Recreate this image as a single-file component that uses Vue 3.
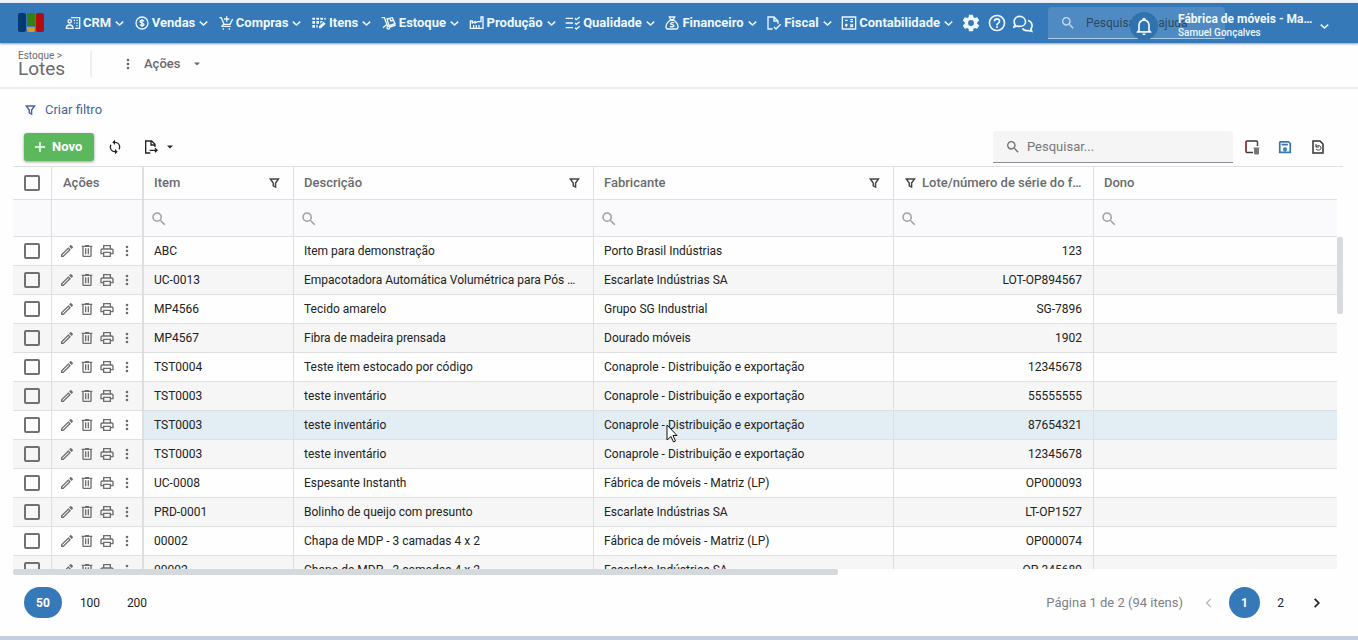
<script setup>
import { ref } from 'vue'

const fill = (d) => ({ fill: true, d })
const line = (d, w = 2) => ({ d, w })

const icons = {
  crm: line('M2 20c0-3 2-5 5-5s5 2 5 5zM7 12a2.500 2.500 0 1 0 0-5 2.500 2.500 0 0 0 0 5M9 4h13v16h-7M13 8h2M17 8h2M14 12h1M17 12h2M17 16h2'),
  vendas: line('M12 3a9 9 0 1 0 0 18 9 9 0 0 0 0-18M15 9.500c-1-2-6-2-6 .3S15 12 15 14.300s-5 2-6 0M12 6v12'),
  compras: line('M2 4h3l4 10h9l4-8M8 14l-2 3h13M8 20v2M17 20v2M13 2v8M9 6h8'),
  itens: fill('M2 4h4v3H2zM8 4h4v3H8zM14 4h4v3h-4zM20 4h2v3h-2zM2 9h4v4H2zM8 9h4v4H8zM2 15h4v4H2zM8 15h2v4H8zM14 9h4l-4 4zM12 17l7-7 3 3-7 7h-3z'),
  estoque: line('M1 4h4l5 13M13 18l9-3M9 6l8-2 4 9-9 3zM13 5l2 4 3-1M11 21a2 2 0 1 0 0-4 2 2 0 0 0 0 4M3 19l6-5'),
  producao: line('M2 20V9h3v3l4-2v2l4-2h5V3h3v17zM7 19v-4M11 19v-4M15 19v-4'),
  qualidade: line('M1 5h11M1 12h11M1 19h11M15 5l2 2 5-4M15 12l2 2 5-4M15 19l2 2 5-4'),
  financeiro: line('M8 3h8l-2 4h-4zM9 8c-4 3-6 7-6 10 0 2 1 3 3 3h12c2 0 3-1 3-3 0-3-2-7-6-10zM15 12c-1-1-5-1-5 1s5 1 5 3-4 2-6 1'),
  fiscal: line('M10 21H3V3h9l6 6v4M12 3v6h6M12 18l3 3 7-7'),
  contabilidade: line('M2 3h20v18H2zM6 8h4M14 7h4M14 10h4M6 15h4M8 13v5M14 14l4 4M18 14l-4 4'),
  chat: line('M15 11c0 3-3 5-7 5-1 0-2 0-3-.5L1 17l1.500-3C.5 11 1 4 8 4c4 0 7 3 7 7M18 9c5 1 6 7 3.500 10l1 3-4-1c-3 .5-6-.5-7-2.500'),
  cog: fill('M12,15.5A3.5,3.5 0 0,1 8.5,12A3.5,3.5 0 0,1 12,8.5A3.5,3.5 0 0,1 15.5,12A3.5,3.5 0 0,1 12,15.5M19.43,12.97C19.47,12.65 19.5,12.33 19.5,12C19.5,11.67 19.47,11.34 19.43,11L21.54,9.37C21.73,9.22 21.78,8.95 21.66,8.73L19.66,5.27C19.54,5.05 19.27,4.96 19.05,5.05L16.56,6.05C16.04,5.66 15.5,5.32 14.87,5.07L14.5,2.42C14.46,2.18 14.25,2 14,2H10C9.75,2 9.54,2.18 9.5,2.42L9.13,5.07C8.5,5.32 7.96,5.66 7.44,6.05L4.95,5.05C4.73,4.96 4.46,5.05 4.34,5.27L2.34,8.73C2.21,8.95 2.27,9.22 2.46,9.37L4.57,11C4.53,11.34 4.5,11.67 4.5,12C4.5,12.33 4.53,12.65 4.57,12.97L2.46,14.63C2.27,14.78 2.21,15.05 2.34,15.27L4.34,18.73C4.46,18.95 4.73,19.03 4.95,18.95L7.44,17.94C7.96,18.34 8.5,18.68 9.13,18.93L9.5,21.58C9.54,21.82 9.75,22 10,22H14C14.25,22 14.46,21.82 14.5,21.58L14.87,18.93C15.5,18.67 16.04,18.34 16.56,17.94L19.05,18.95C19.27,19.03 19.54,18.95 19.66,18.73L21.66,15.27C21.78,15.05 21.73,14.78 21.54,14.63L19.43,12.97Z'),
  help: fill('M11,18H13V16H11V18M12,2A10,10 0 0,0 2,12A10,10 0 0,0 12,22A10,10 0 0,0 22,12A10,10 0 0,0 12,2M12,20C7.59,20 4,16.41 4,12C4,7.59 7.59,4 12,4C16.41,4 20,7.59 20,12C20,16.41 16.41,20 12,20M12,6A4,4 0 0,0 8,10H10A2,2 0 0,1 12,8A2,2 0 0,1 14,10C14,12 11,11.75 11,15H13C13,12.75 16,12.5 16,10A4,4 0 0,0 12,6Z'),
  bell: fill('M10 21H14C14 22.1 13.1 23 12 23S10 22.1 10 21M21 19V20H3V19L5 17V11C5 7.9 7.03 5.17 10 4.29V4C10 2.9 10.9 2 12 2S14 2.9 14 4V4.29C16.97 5.17 19 7.9 19 11V17L21 19M17 11C17 8.24 14.76 6 12 6S7 8.24 7 11V18H17V11Z'),
  search: fill('M15.5 14h-.79l-.28-.27A6.471 6.471 0 0 0 16 9.5 6.5 6.5 0 1 0 9.5 16c1.61 0 3.09-.59 4.23-1.57l.27.28v.79l5 4.99L20.49 19l-4.99-5zm-6 0C7.01 14 5 11.99 5 9.5S7.01 5 9.5 5 14 7.01 14 9.5 11.99 14 9.5 14z'),
  filter: line('M4 5h14l-5 7v7l-4-2v-5z', 2.5),
  pencil: fill('M14.06,9L15,9.94L5.92,19H5V18.08L14.06,9M17.66,3C17.41,3 17.15,3.1 16.96,3.29L15.13,5.12L18.88,8.87L20.71,7.04C21.1,6.65 21.1,6 20.71,5.63L18.37,3.29C18.17,3.09 17.92,3 17.66,3M14.06,6.19L3,17.25V21H6.75L17.81,9.94L14.06,6.19Z'),
  trash: fill('M9,3V4H4V6H5V19A2,2 0 0,0 7,21H17A2,2 0 0,0 19,19V6H20V4H15V3H9M7,6H17V19H7V6M9,8V17H11V8H9M13,8V17H15V8H13Z'),
  printer: fill('M19 8C20.66 8 22 9.34 22 11V17H18V21H6V17H2V11C2 9.34 3.34 8 5 8H6V3H18V8H19M8 5V8H16V5H8M16 19V15H8V19H16M18 15H20V11C20 10.45 19.55 10 19 10H5C4.45 10 4 10.45 4 11V15H6V13H18V15Z'),
  dots: fill('M12,16A2,2 0 0,1 14,18A2,2 0 0,1 12,20A2,2 0 0,1 10,18A2,2 0 0,1 12,16M12,10A2,2 0 0,1 14,12A2,2 0 0,1 12,14A2,2 0 0,1 10,12A2,2 0 0,1 12,10M12,4A2,2 0 0,1 14,6A2,2 0 0,1 12,8A2,2 0 0,1 10,6A2,2 0 0,1 12,4Z'),
  sync: fill('M12,18A6,6 0 0,1 6,12C6,11 6.25,10.03 6.7,9.2L5.24,7.74C4.46,8.97 4,10.43 4,12A8,8 0 0,0 12,20V23L16,19L12,15M12,4V1L8,5L12,9V6A6,6 0 0,1 18,12C18,13 17.75,13.97 17.3,14.8L18.76,16.26C19.54,15.03 20,13.57 20,12A8,8 0 0,0 12,4Z'),
  exportar: line('M11 21H4V3h9l5 5v4M12 3v6h6M10 17h11M18 14l3 3-3 3'),
  plus: line('M12 2v20M2 12h20', 3),
  down: line('M2 7l10 9 10-9', 4),
  caret: fill('M6 9l6 6 6-6z'),
  left: line('M15 5l-7 7 7 7'),
  right: line('M8 5l7 7-7 7', 3),
  save: line('M4 3h14l3 3v15H3V4zM6 8h11M12 18a2 2 0 1 0 0-4 2 2 0 0 0 0 4', 3),
}

const menus = [
  ['crm', 'CRM'], ['vendas', 'Vendas'], ['compras', 'Compras'], ['itens', 'Itens'],
  ['estoque', 'Estoque'], ['producao', 'Produção'], ['qualidade', 'Qualidade'],
  ['financeiro', 'Financeiro'], ['fiscal', 'Fiscal'], ['contabilidade', 'Contabilidade'],
]
const tools = [['cog', 'Configurações'], ['help', 'Ajuda'], ['chat', 'Conversas']]
const rowActions = [['pencil', 'Editar'], ['trash', 'Excluir'], ['printer', 'Imprimir'], ['dots', 'Mais']]

const conaprole = 'Conaprole - Distribuição e exportação'
const rows = [
  ['ABC', 'Item para demonstração', 'Porto Brasil Indústrias', '123'],
  ['UC-0013', 'Empacotadora Automática Volumétrica para Pós Granulados', 'Escarlate Indústrias SA', 'LOT-OP894567'],
  ['MP4566', 'Tecido amarelo', 'Grupo SG Industrial', 'SG-7896'],
  ['MP4567', 'Fibra de madeira prensada', 'Dourado móveis', '1902'],
  ['TST0004', 'Teste item estocado por código', conaprole, '12345678'],
  ['TST0003', 'teste inventário', conaprole, '55555555'],
  ['TST0003', 'teste inventário', conaprole, '87654321'],
  ['TST0003', 'teste inventário', conaprole, '12345678'],
  ['UC-0008', 'Espesante Instanth', 'Fábrica de móveis - Matriz (LP)', 'OP000093'],
  ['PRD-0001', 'Bolinho de queijo com presunto', 'Escarlate Indústrias SA', 'LT-OP1527'],
  ['00002', 'Chapa de MDP - 3 camadas 4 x 2', 'Fábrica de móveis - Matriz (LP)', 'OP000074'],
  ['00002', 'Chapa de MDP - 3 camadas 4 x 2', 'Escarlate Indústrias SA', 'OP-345689'],
]
const hovered = ref(6)
const paint = (name) => icons[name].fill
  ? { fill: 'currentColor', stroke: 'none' }
  : { fill: 'none', stroke: 'currentColor', 'stroke-width': icons[name].w }
</script>

<template>
  <div class="app">
    <header class="topbar">
      <a class="logo" href="#" aria-label="Início">
        <svg viewBox="0 0 26 20">
          <rect width="8" height="19" rx="2" fill="#043a72" />
          <path d="M9 0h8v13H9z" fill="#33810f" />
          <path d="M9 14h8v3q0 2-2 2h-4q-2 0-2-2z" fill="#d29b2c" />
          <rect x="18" width="8" height="19" rx="2" fill="#b50b0c" />
        </svg>
      </a>
      <nav class="menu">
        <button v-for="[icon, label] in menus" :key="label" class="menu-item">
          <svg class="i16" viewBox="0 0 24 24" v-bind="paint(icon)"><path :d="icons[icon].d" /></svg>
          <span>{{ label }}</span>
          <svg class="chev" viewBox="0 0 24 24" v-bind="paint('down')"><path :d="icons.down.d" /></svg>
        </button>
      </nav>
      <div class="tools">
        <button v-for="[icon, label] in tools" :key="icon" :aria-label="label">
          <svg class="i20" viewBox="0 0 24 24" v-bind="paint(icon)"><path :d="icons[icon].d" /></svg>
        </button>
      </div>
      <label class="help-search">
        <svg class="i16" viewBox="0 0 24 24" v-bind="paint('search')"><path :d="icons.search.d" /></svg>
        <input type="text" placeholder="Pesquisar na ajuda" aria-label="Pesquisar na ajuda" />
      </label>
      <div class="account">
        <button class="bell" aria-label="Notificações">
          <svg class="i20" viewBox="0 0 24 24" v-bind="paint('bell')"><path :d="icons.bell.d" /></svg>
        </button>
        <button class="user">
          <span class="names">
            <span class="company">Fábrica de móveis - Matriz (LP)</span>
            <span class="person">Samuel Gonçalves</span>
          </span>
          <svg class="chev" viewBox="0 0 24 24" v-bind="paint('down')"><path :d="icons.down.d" /></svg>
        </button>
      </div>
    </header>

    <div class="subbar">
      <div class="title">
        <a href="#" class="crumb">Estoque &gt;</a>
        <h1>Lotes</h1>
      </div>
      <button class="actions">
        <svg class="i16" viewBox="0 0 24 24" v-bind="paint('dots')"><path :d="icons.dots.d" /></svg>
        <span>Ações</span>
        <svg class="caret" viewBox="0 0 24 24" v-bind="paint('caret')"><path :d="icons.caret.d" /></svg>
      </button>
    </div>

    <main>
      <a class="create-filter" href="#">
        <svg class="i14" viewBox="0 0 24 24" v-bind="paint('filter')"><path :d="icons.filter.d" /></svg>
        <span>Criar filtro</span>
      </a>

      <div class="toolbar">
        <button class="new">
          <svg class="plus" viewBox="0 0 24 24" v-bind="paint('plus')"><path :d="icons.plus.d" /></svg>
          <span>Novo</span>
        </button>
        <button class="refresh" aria-label="Atualizar">
          <svg class="i16" viewBox="0 0 24 24" v-bind="paint('sync')"><path :d="icons.sync.d" /></svg>
        </button>
        <button class="export" aria-label="Exportar">
          <svg class="i16" viewBox="0 0 24 24" v-bind="paint('exportar')"><path :d="icons.exportar.d" /></svg>
          <svg class="caret" viewBox="0 0 24 24" v-bind="paint('caret')"><path :d="icons.caret.d" /></svg>
        </button>
        <label class="search">
          <svg class="i16" viewBox="0 0 24 24" v-bind="paint('search')"><path :d="icons.search.d" /></svg>
          <input type="text" placeholder="Pesquisar..." aria-label="Pesquisar" />
        </label>
        <div class="views">
          <button aria-label="Selecionar colunas">
            <svg viewBox="0 0 16 16" fill="none">
              <path d="M9 13.500H3q-1 0-1-1V3q0-1 1-1h9.500q1 0 1 1v4" stroke="#43373a" stroke-width="1.500" />
              <path d="M2 12V3M13.500 2.500V6" stroke="#c32626" />
              <path d="M10.500 9.500h4V15h-4zM9.500 9h6" fill="#77757d" stroke="#77757d" />
            </svg>
          </button>
          <button class="save" aria-label="Salvar visualização">
            <svg viewBox="0 0 24 24" v-bind="paint('save')"><path :d="icons.save.d" /></svg>
          </button>
          <button aria-label="Restaurar visualização">
            <svg viewBox="0 0 16 16" fill="none" stroke-width="1.500">
              <path d="M3 14V2h7l3 3v9z" stroke="#333" />
              <path d="M13.500 5v8" stroke="#c33" stroke-width="1" />
              <path d="M6 5v3h3M6 8c2-3 5-1 5 1s-3 3-5 1" stroke="#333" stroke-width="1" />
            </svg>
          </button>
        </div>
      </div>

      <div class="grid">
        <table>
          <colgroup>
            <col class="c-check" /><col class="c-act" /><col class="c-item" /><col class="c-text" />
            <col class="c-text" /><col class="c-lot" /><col />
          </colgroup>
          <thead>
            <tr class="heads">
              <th class="check"><input type="checkbox" aria-label="Selecionar todos" /></th>
              <th class="acts">Ações</th>
              <th v-for="h in ['Item', 'Descrição', 'Fabricante']" :key="h">
                <div class="head">
                  <span>{{ h }}</span>
                  <svg class="i14" viewBox="0 0 24 24" v-bind="paint('filter')"><path :d="icons.filter.d" /></svg>
                </div>
              </th>
              <th>
                <div class="head">
                  <svg class="i14" viewBox="0 0 24 24" v-bind="paint('filter')"><path :d="icons.filter.d" /></svg>
                  <span>Lote/número de série do fabricante</span>
                </div>
              </th>
              <th>Dono</th>
            </tr>
            <tr class="filters">
              <td></td>
              <td class="acts"></td>
              <td v-for="n in 5" :key="n">
                <label>
                  <svg class="i18" viewBox="0 0 24 24" v-bind="paint('search')"><path :d="icons.search.d" /></svg>
                  <input type="text" aria-label="Filtrar coluna" />
                </label>
              </td>
            </tr>
          </thead>
          <tbody>
            <tr v-for="(row, r) in rows" :key="r" :class="{ hovered: r === hovered }">
              <td class="check"><input type="checkbox" :aria-label="'Selecionar ' + row[0]" /></td>
              <td class="acts">
                <div class="row-actions">
                  <button v-for="[icon, label] in rowActions" :key="icon" :aria-label="label">
                    <svg class="i16" viewBox="0 0 24 24" v-bind="paint(icon)"><path :d="icons[icon].d" /></svg>
                  </button>
                </div>
              </td>
              <td>{{ row[0] }}</td>
              <td>{{ row[1] }}</td>
              <td>{{ row[2] }}</td>
              <td class="num">{{ row[3] }}</td>
              <td></td>
            </tr>
          </tbody>
        </table>
        <div class="vscroll"></div>
        <svg class="cursor" viewBox="0 0 12 19"><path d="M1 1v15l4-3.500 2.500 5.500 2-1-2.500-5.500H11z" fill="#fff" stroke="#111" /></svg>
      </div>
      <div class="hscroll"></div>

      <footer class="pager">
        <div class="sizes">
          <button class="on">50</button>
          <button>100</button>
          <button>200</button>
        </div>
        <span class="info">Página 1 de 2 (94 itens)</span>
        <div class="pages">
          <button class="prev" aria-label="Página anterior">
            <svg class="i14" viewBox="0 0 24 24" v-bind="paint('left')"><path :d="icons.left.d" /></svg>
          </button>
          <button class="on">1</button>
          <button>2</button>
          <button aria-label="Próxima página">
            <svg class="i14" viewBox="0 0 24 24" v-bind="paint('right')"><path :d="icons.right.d" /></svg>
          </button>
        </div>
      </footer>
    </main>
  </div>
</template>

<style>
body {
  margin: 0;
  background: #fdfefd;
}
</style>

<style scoped>
* {
  box-sizing: border-box;
}
.app {
  display: flex;
  flex-direction: column;
  height: 100vh;
  border-top: 3px solid #eef3f8;
  border-bottom: 4px solid #c5cfdf;
  font: 12px/16px Roboto, "Liberation Sans", sans-serif;
  color: #222;
}
button,
input {
  font: inherit;
  color: inherit;
  margin: 0;
}
button {
  display: inline-flex;
  align-items: center;
  padding: 0;
  border: 0;
  background: none;
}
input[type="text"] {
  flex: 1;
  min-width: 0;
  padding: 0;
  border: 0;
  outline: 0;
  background: none;
}
a {
  color: inherit;
  text-decoration: none;
}
svg {
  flex: none;
  display: block;
}
.i14 { width: 14px; height: 14px; }
.i16 { width: 16px; height: 16px; }
.i18 { width: 18px; height: 18px; }
.i20 { width: 20px; height: 20px; }
.chev { width: 9px; height: 9px; }
.caret { width: 12px; height: 12px; }

.topbar {
  position: relative;
  flex: none;
  display: flex;
  align-items: center;
  height: 40px;
  padding-left: 18px;
  background: #3579b9;
  color: #eef8ff;
  box-shadow: 0 1px 2px #8b9bb0;
}
.logo svg {
  width: 26px;
  height: 20px;
}
.menu {
  flex: 0 1 888px;
  display: flex;
  justify-content: space-between;
  margin-left: 21px;
}
.menu-item {
  font-size: 13px;
  font-weight: 700;
}
.menu-item span {
  margin: 0 4px 0 2px;
}
.tools {
  display: flex;
  gap: 6px;
  margin-left: 8px;
}
.help-search {
  display: flex;
  align-items: center;
  gap: 10px;
  width: 177px;
  height: 32px;
  margin-left: 15px;
  padding: 0 12px;
  border-bottom: 1px solid #a9cdea;
  border-radius: 4px 4px 0 0;
  background: #4f8bc2;
  color: #c5dcf0;
}
.help-search input {
  color: #23415f;
}
.help-search input::placeholder {
  color: #2b4865;
  opacity: 1;
}
.account {
  position: absolute;
  top: 0;
  right: 29px;
  display: flex;
  align-items: center;
  gap: 20px;
  height: 46px;
}
.bell {
  justify-content: center;
  width: 28px;
  height: 28px;
  border-radius: 14px;
  background: #3072ae;
}
.user {
  gap: 7px;
  text-align: left;
}
.names {
  display: flex;
  flex-direction: column;
  width: 135px;
}
.company {
  overflow: hidden;
  text-overflow: ellipsis;
  white-space: nowrap;
  font-weight: 700;
  line-height: 14px;
}
.person {
  font-size: 10px;
  font-weight: 500;
  line-height: 14px;
}

.subbar {
  flex: none;
  display: flex;
  align-items: center;
  height: 46px;
  padding: 0 0 2px 18px;
  border-bottom: 2px solid #ececee;
  color: #6a6a6e;
}
.title {
  width: 74px;
  border-right: 2px solid #eee;
}
.crumb {
  display: block;
  font-size: 10px;
  line-height: 10px;
}
h1 {
  margin: 0;
  font-size: 19px;
  font-weight: 400;
  line-height: 16px;
}
.actions {
  margin-left: 28px;
  font-size: 13px;
  font-weight: 500;
}
.actions span {
  margin: 0 11px 0 8px;
}

main {
  flex: 1;
  min-height: 0;
  display: flex;
  flex-direction: column;
  padding: 0 15px 0 13px;
}
.create-filter {
  display: flex;
  align-items: center;
  gap: 7px;
  margin: 13px 0 0 11px;
  color: #46679c;
  font-size: 13px;
}
.toolbar {
  flex: none;
  display: flex;
  align-items: center;
  height: 32px;
  margin: 13px 0 3px 11px;
}
.new {
  gap: 6px;
  height: 28px;
  padding: 0 12px 0 10px;
  border-radius: 3px;
  background: #5cb85c;
  color: #fff;
  font-size: 13px;
  font-weight: 700;
  box-shadow: 0 1px 3px #999;
}
.plus {
  width: 12px;
  height: 12px;
}
.refresh {
  margin-left: 13px;
}
.export {
  gap: 5px;
  margin-left: 20px;
}
.search {
  display: flex;
  align-items: center;
  gap: 6px;
  width: 240px;
  height: 32px;
  margin-left: auto;
  padding: 0 12px;
  border-bottom: 1px solid #8b8c92;
  border-radius: 4px 4px 0 0;
  background: #f4f5f4;
  color: #707074;
  font-size: 13px;
}
.search input::placeholder {
  color: #77777b;
  opacity: 1;
}
.views {
  display: flex;
  align-items: center;
  gap: 17px;
  margin: 0 17px 0 11px;
}
.views svg {
  width: 16px;
  height: 16px;
}
.views .save svg {
  width: 14px;
  height: 14px;
  margin: 0 1px;
  color: #3a78b5;
}

.grid {
  position: relative;
  flex: 1;
  min-height: 0;
  overflow: hidden;
  border-top: 1px solid #dedfe1;
}
table {
  width: calc(100% - 6px);
  table-layout: fixed;
  border-collapse: separate;
  border-spacing: 0;
}
.c-check { width: 39px; }
.c-act { width: 92px; }
.c-item { width: 150px; }
.c-text { width: 300px; }
.c-lot { width: 200px; }
th,
td {
  height: 29px;
  padding: 0 11px 0 10px;
  border-right: 1px solid #dedfe1;
  border-bottom: 1px solid #dedfe1;
  overflow: hidden;
  text-overflow: ellipsis;
  white-space: nowrap;
  text-align: left;
}
th:last-child,
td:last-child {
  border-right: 0;
}
.acts {
  padding-left: 11px;
  border-right-width: 2px;
}
.check {
  padding: 0 0 0 11px;
}
.heads th {
  height: 33px;
  color: #6a6b6f;
  font-size: 13px;
  font-weight: 500;
}
.filters td {
  height: 37px;
  padding: 2px 11px 0 6px;
  background: #fafafc;
  color: #a0a1a4;
}
.filters label {
  display: flex;
  align-items: center;
}
.head {
  display: flex;
  align-items: center;
  justify-content: space-between;
  gap: 4px;
}
.head span {
  overflow: hidden;
  text-overflow: ellipsis;
}
.head svg {
  color: #47474b;
}
tbody tr:nth-child(even) td {
  background: #f5f6f5;
}
tbody tr.hovered td {
  background: #e2edf4;
}
tbody tr.hovered .check,
tbody tr.hovered .acts {
  background: #fdfefd;
}
tbody .acts {
  padding: 0 0 0 7px;
}
.row-actions {
  display: flex;
  gap: 4px;
  color: #6d6d70;
}
.num {
  text-align: right;
}
input[type="checkbox"] {
  appearance: none;
  display: block;
  width: 16px;
  height: 16px;
  border: 2px solid #717174;
  border-radius: 2px;
}
.vscroll {
  position: absolute;
  top: 70px;
  right: 0;
  width: 6px;
  height: 77px;
  border-radius: 2px;
  background: #d7dade;
}
.hscroll {
  flex: none;
  width: 62%;
  height: 6px;
  border-radius: 2px;
  background: #d5d9dc;
}
.cursor {
  position: absolute;
  top: 257px;
  left: 653px;
  width: 12px;
  height: 19px;
}

.pager {
  flex: none;
  display: flex;
  align-items: center;
  height: 61px;
  padding: 0 11px 6px;
}
.sizes,
.pages {
  display: flex;
  align-items: center;
}
.sizes {
  gap: 9px;
}
.pager button {
  justify-content: center;
  min-width: 31px;
  height: 31px;
  border-radius: 16px;
}
.sizes button {
  min-width: 38px;
}
.pager .on {
  background: #3579b9;
  color: #fff;
  font-weight: 700;
}
.info {
  margin: 0 10px 0 auto;
  color: #7e7f84;
  font-size: 13px;
}
.pages {
  gap: 5px;
}
.pages .prev {
  color: #b0b1b8;
}
</style>
